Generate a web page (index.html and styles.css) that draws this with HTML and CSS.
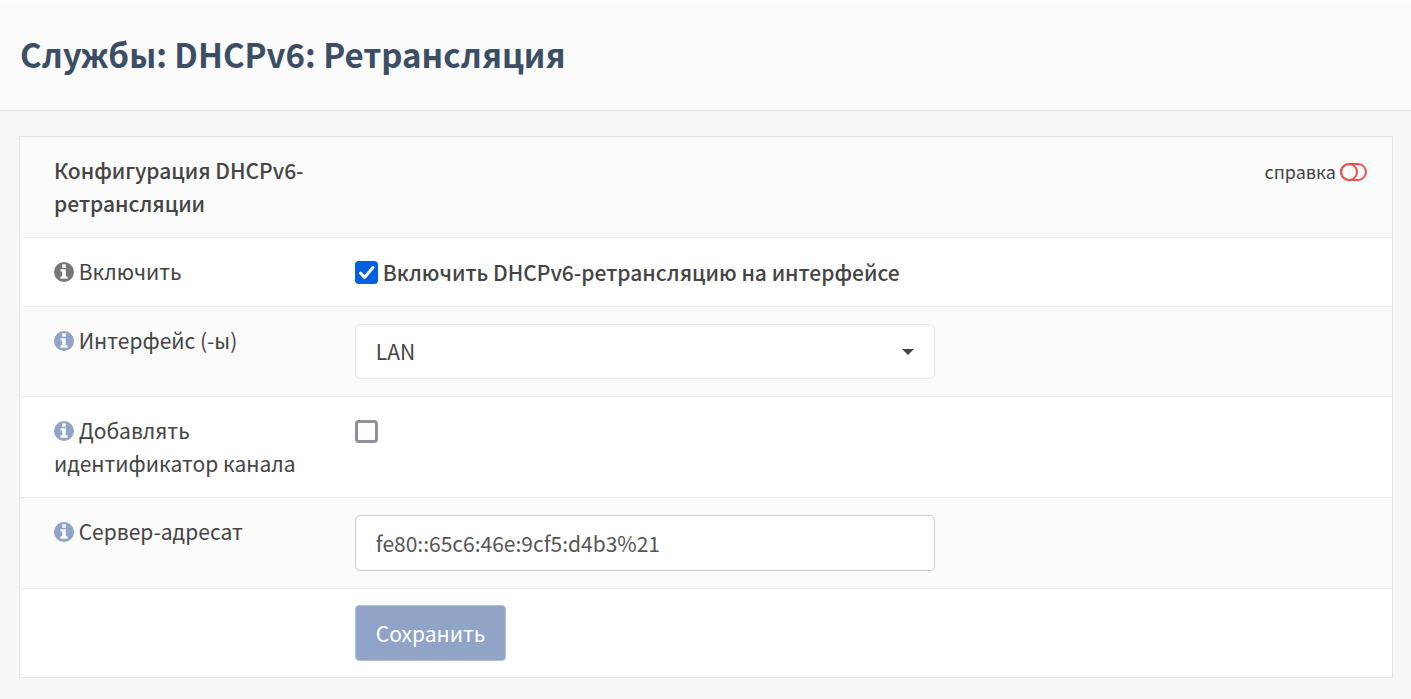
FILE: index.html
```
<!DOCTYPE html>
<html lang="ru">
<head>
  <meta charset="UTF-8" />
  <meta name="viewport" content="width=device-width, initial-scale=1.0" />
  <title>Службы: DHCPv6: Ретрансляция</title>
  <link rel="stylesheet" href="styles.css">
</head>
<body>
  <svg class="sprite" aria-hidden="true">
    <symbol id="info" viewBox="0 0 20 20">
      <path fill-rule="evenodd" d="M10 0a10 10 0 1 1 0 20a10 10 0 0 1 0-20zM8.200 2.200v3.500h3.600V2.200zM6.500 7.300v2.200h1.700v4.800H6.500v2.400h7.100v-2.400h-1.800v-7z"/>
    </symbol>
  </svg>

  <header class="page-head">
    <h1>Службы: DHCPv6: Ретрансляция</h1>
  </header>

  <main class="page-content">
    <form class="content-box">
      <table class="settings">
        <tr>
          <td><strong>Конфигурация DHCPv6-ретрансляции</strong></td>
          <td class="help-cell">
            <a href="#" class="help">справка
              <svg class="toggle" viewBox="0 0 27 18" aria-hidden="true">
                <rect x="1" y="1" width="25" height="16" rx="8"/>
                <circle cx="9" cy="9" r="8"/>
              </svg>
            </a>
          </td>
        </tr>
        <tr>
          <td><svg class="info muted"><use href="#info"/></svg> Включить</td>
          <td>
            <label class="check"><input type="checkbox" checked> <strong>Включить DHCPv6-ретрансляцию на интерфейсе</strong></label>
          </td>
        </tr>
        <tr>
          <td><a href="#" aria-label="Помощь"><svg class="info"><use href="#info"/></svg></a> <label for="iface">Интерфейс (-ы)</label></td>
          <td>
            <select id="iface" class="field select">
              <option>LAN</option>
            </select>
          </td>
        </tr>
        <tr>
          <td><a href="#" aria-label="Помощь"><svg class="info"><use href="#info"/></svg></a> <label for="agent">Добавлять идентификатор канала</label></td>
          <td><div class="check"><input type="checkbox" id="agent"></div></td>
        </tr>
        <tr>
          <td><a href="#" aria-label="Помощь"><svg class="info"><use href="#info"/></svg></a> <label for="server">Сервер-адресат</label></td>
          <td><input type="text" id="server" class="field" value="fe80::65c6:46e:9cf5:d4b3%21"></td>
        </tr>
        <tr>
          <td></td>
          <td><button type="button" class="btn">Сохранить</button></td>
        </tr>
      </table>
    </form>
  </main>
</body>
</html>
```
FILE: styles.css
```
* {
  box-sizing: border-box;
}
body {
  margin: 0;
  background: #f7f7f7;
  color: #444;
  font-family: "Noto Sans CJK SC", "Noto Sans", sans-serif;
  font-size: 21px;
  line-height: 33px;
}
.sprite {
  display: none;
}
.page-head {
  background: #fbfbfb;
  border-top: 2px solid #fff;
  border-bottom: 1px solid #e5e5e5;
  padding: 30px 20px 34px;
}
h1 {
  margin: 0;
  color: #3c4e65;
  font-size: 33px;
  font-weight: 700;
  line-height: 44px;
}
.page-content {
  padding: 25px 18px 20px 19px;
}
.content-box {
  background: #fff;
  border: 1px solid #e5e5e5;
}
.settings {
  width: 100%;
  border-collapse: collapse;
}
.settings td {
  padding: 17px 33px;
  vertical-align: top;
}
.settings td:first-child {
  width: 22%;
  padding: 17px 17px 17px 34px;
}
.settings tr + tr td {
  border-top: 1px solid #ebebeb;
}
.settings tr:nth-child(odd) {
  background: #fbfbfb;
}
.settings tr:last-child td {
  padding-top: 16px;
  padding-bottom: 16px;
}
strong {
  font-weight: 500;
}
.settings .help-cell {
  padding-right: 25px;
  text-align: right;
}
.help {
  display: inline-flex;
  align-items: center;
  gap: 4px;
  color: #444;
  font-size: 18px;
  text-decoration: none;
}
.toggle {
  width: 27px;
  height: 18px;
  fill: none;
  stroke: #f0524f;
  stroke-width: 2;
}
.info {
  width: 20px;
  height: 20px;
  fill: #90a4c8;
  vertical-align: -2px;
}
.info.muted {
  fill: #777;
}
.check {
  display: flex;
  align-items: center;
  gap: 5px;
  height: 34px;
}
input[type="checkbox"] {
  appearance: none;
  width: 23px;
  height: 23px;
  margin: 0;
  border: 3px solid #8f8f9d;
  border-radius: 4px;
  background: #fff;
}
input[type="checkbox"]:checked {
  border: 0;
  background: #0060df url("data:image/svg+xml,%3Csvg xmlns='http://www.w3.org/2000/svg' viewBox='0 0 23 23'%3E%3Cpath d='M5.500 12l4 4.500L18 6.500' fill='none' stroke='white' stroke-width='3' stroke-linecap='round' stroke-linejoin='round'/%3E%3C/svg%3E");
}
.field {
  display: block;
  width: 100%;
  max-width: 580px;
  height: 56px;
  padding: 0 20px;
  border: 1px solid #ccc;
  border-radius: 5px;
  background: #fff;
  color: #555;
  font: inherit;
}
.select {
  appearance: none;
  height: 55px;
  border-color: #e5e5e5;
  color: #444;
  background: #fff url("data:image/svg+xml,%3Csvg xmlns='http://www.w3.org/2000/svg' viewBox='0 0 12 6'%3E%3Cpath d='M0 0h12l-6 6z' fill='%23444'/%3E%3C/svg%3E") no-repeat right 20px center / 12px 6px;
}
.btn {
  display: block;
  height: 56px;
  padding: 0 20px;
  border: 1px solid #b0c4e0;
  border-radius: 4px;
  background: #90a4c8;
  color: #fff;
  font: inherit;
}
```
